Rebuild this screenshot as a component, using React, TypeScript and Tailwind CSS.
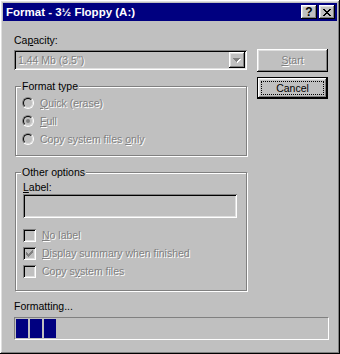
import React from "react";

const raised =
  "shadow-[inset_-1px_-1px_0_#000,inset_1px_1px_0_#fff,inset_-2px_-2px_0_#808080,inset_2px_2px_0_#dfdfdf]";
const sunken =
  "shadow-[inset_1px_1px_0_#808080,inset_-1px_-1px_0_#fff,inset_2px_2px_0_#000,inset_-2px_-2px_0_#dfdfdf]";
const etched = "border border-[#808080] shadow-[inset_1px_1px_0_#fff,1px_1px_0_#fff]";
const dim = "text-[#808080] [text-shadow:1px_1px_0_#fff]";

function Radio({ checked }: { checked?: boolean }) {
  return (
    <span className="w-[12px] h-[12px] rounded-full border border-t-[#808080] border-l-[#808080] border-b-white border-r-white flex">
      <span className="flex-1 rounded-full border border-t-[#000] border-l-[#000] border-b-[#dfdfdf] border-r-[#dfdfdf] bg-[#c0c0c0] flex items-center justify-center">
        {checked && <span className="w-[4px] h-[4px] rounded-full bg-[#808080]" />}
      </span>
    </span>
  );
}

function Check({ checked }: { checked?: boolean }) {
  return (
    <span className={`w-[13px] h-[13px] bg-[#c0c0c0] flex items-center justify-center ${sunken}`}>
      {checked && (
        <svg width="7" height="7" viewBox="0 0 7 7" shapeRendering="crispEdges">
          <path d="M0 2h1v1h1v1h1v-1h1v-1h1v-1h1v-1h1v3h-1v1h-1v1h-1v1h-1v1h-1v-1h-1v-1h-1z" fill="#808080" />
        </svg>
      )}
    </span>
  );
}

export default function App() {
  return (
    <div
      className={`w-[340px] h-[354px] bg-[#c0c0c0] p-[3px] font-['Liberation_Sans',Arial,sans-serif] text-[10.5px] leading-[13px] text-black ${raised}`}
    >
      {/* title bar */}
      <div className="h-[18px] bg-[#000080] flex items-center pl-[3px] pr-[2px]">
        <span className="flex-1 text-white font-bold text-[11.5px]">Format - 3½ Floppy (A:)</span>
        <div className="flex gap-[2px]">
          <div className={`w-[16px] h-[14px] bg-[#c0c0c0] flex items-center justify-center font-bold text-[12px] leading-none ${raised}`}>
            ?
          </div>
          <div className={`w-[16px] h-[14px] bg-[#c0c0c0] flex items-center justify-center ${raised}`}>
            <svg width="8" height="7" viewBox="0 0 8 7" shapeRendering="crispEdges">
              <path
                d="M0 0h2v1h1v1h2v-1h1v-1h2v1h-1v1h-1v1h-1v1h1v1h1v1h1v1h-2v-1h-1v-1h-2v1h-1v1h-2v-1h1v-1h1v-1h1v-1h-1v-1h-1v-1h-1z"
                fill="#000"
              />
            </svg>
          </div>
        </div>
      </div>

      <div className="pl-[11px] pt-[13px]">
        <div className="flex">
          {/* left column */}
          <div className="w-[233px]">
            <div>
              Ca<u>p</u>acity:
            </div>
            <div className={`mt-[3px] h-[20px] flex items-center pl-[4px] pr-[2px] bg-[#c0c0c0] ${sunken}`}>
              <span className={`flex-1 ${dim}`}>1.44 Mb (3.5")</span>
              <div className={`w-[16px] h-[16px] bg-[#c0c0c0] flex items-center justify-center ${raised}`}>
                <svg width="8" height="5" viewBox="0 0 8 5" shapeRendering="crispEdges">
                  <path d="M1 1h7v1h-1v1h-1v1h-1v1h-1v-1h-1v-1h-1v-1h-1z" fill="#fff" />
                  <path d="M0 0h7v1h-1v1h-1v1h-1v1h-1v-1h-1v-1h-1v-1h-1z" fill="#808080" />
                </svg>
              </div>
            </div>

            <div className={`relative ml-px mt-[16px] w-[232px] h-[70px] ${etched}`}>
              <span className="absolute left-[5px] -top-[7px] px-[1px] bg-[#c0c0c0]">Format type</span>
              <div className="pt-[7px] pl-[6px] flex flex-col">
                <div className="h-[18px] flex items-center gap-[6px]">
                  <Radio />
                  <span className={dim}>
                    <u>Q</u>uick (erase)
                  </span>
                </div>
                <div className="h-[18px] flex items-center gap-[6px]">
                  <Radio checked />
                  <span className={dim}>
                    <u>F</u>ull
                  </span>
                </div>
                <div className="h-[18px] flex items-center gap-[6px]">
                  <Radio />
                  <span className={dim}>
                    Copy system files <u>o</u>nly
                  </span>
                </div>
              </div>
            </div>

            <div className={`relative ml-px mt-[16px] w-[232px] h-[119px] ${etched}`}>
              <span className="absolute left-[5px] -top-[7px] px-[1px] bg-[#c0c0c0]">Other options</span>
              <div className="pt-[8px] pl-[7px]">
                <div>
                  <u>L</u>abel:
                </div>
                <div className={`w-[214px] h-[24px] bg-[#c0c0c0] ${sunken}`} />
                <div className="mt-[8px] flex flex-col">
                  <div className="h-[18px] flex items-center gap-[6px]">
                    <Check />
                    <span className={dim}>
                      <u>N</u>o label
                    </span>
                  </div>
                  <div className="h-[18px] flex items-center gap-[6px]">
                    <Check checked />
                    <span className={dim}>
                      <u>D</u>isplay summary when finished
                    </span>
                  </div>
                  <div className="h-[18px] flex items-center gap-[6px]">
                    <Check />
                    <span className={dim}>
                      Copy s<u>y</u>stem files
                    </span>
                  </div>
                </div>
              </div>
            </div>
          </div>

          {/* right column */}
          <div className="ml-[10px] w-[71px] flex flex-col">
            <div className={`mt-[15px] h-[23px] bg-[#c0c0c0] flex items-center justify-center ${raised}`}>
              <span className={dim}>
                <u>S</u>tart
              </span>
            </div>
            <div className="mt-[5px] h-[22px] border border-black flex">
              <div className={`flex-1 flex p-[3px] ${raised}`}>
                <div className="flex-1 border border-dotted border-black flex items-center justify-center">
                  Cancel
                </div>
              </div>
            </div>
          </div>
        </div>

        <div className="mt-[9px]">Formatting...</div>
        <div className="mt-[4px] w-[315px] h-[23px] border border-t-[#808080] border-l-[#808080] border-b-white border-r-white flex gap-[2px] p-[1px]">
          <div className="w-[12px] bg-[#000080]" />
          <div className="w-[12px] bg-[#000080]" />
          <div className="w-[12px] bg-[#000080]" />
        </div>
      </div>
    </div>
  );
}
